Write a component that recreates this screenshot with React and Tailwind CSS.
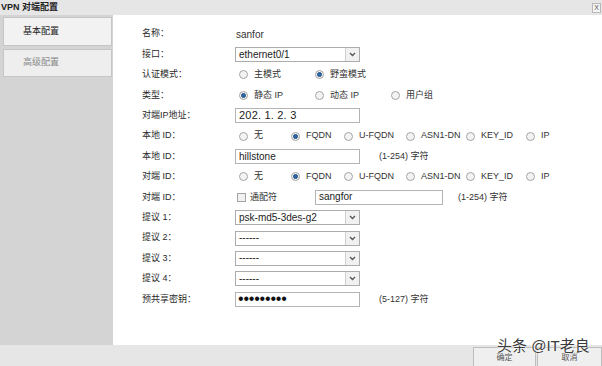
import React from 'react';

const Radio = ({ checked, label, className = '' }) => (
    <div className={`flex items-center ${className}`}>
        <span className="w-[9px] h-[9px] rounded-full border border-[#a4a4a4] bg-[#f3f3f3] flex items-center justify-center shrink-0">
            {checked && <span className="w-[5px] h-[5px] rounded-full bg-[#2f68a8] border border-[#1f4f85]"></span>}
        </span>
        <span className="ml-[6px] text-[9px] text-[#333]">{label}</span>
    </div>
);

const Chevron = () => (
    <svg width="7" height="5" viewBox="0 0 7 5">
        <path d="M1 1 L3.5 3.5 L6 1" fill="none" stroke="#555" strokeWidth="1.3" />
    </svg>
);

const Select = ({ value }) => (
    <div className="w-[125px] h-[15px] border border-[#acacac] bg-white flex items-center">
        <span className="flex-1 pl-[3px] text-[10px] text-[#222] leading-none">{value}</span>
        <span className="w-[14px] h-[13px] border-l border-[#cfcfcf] bg-[#f1f1f1] flex items-center justify-center">
            <Chevron />
        </span>
    </div>
);

const Input = ({ value, className = 'w-[125px]', textClass = 'text-[10px]' }) => (
    <div className={`h-[15px] border border-[#b4b4b4] bg-white flex items-center pl-[3px] ${className}`}>
        <span className={`${textClass} text-[#222] leading-none`}>{value}</span>
    </div>
);

const Row = ({ label, children }) => (
    <div className="flex items-center h-[20.4px]">
        <div className="w-[93px] text-[9px] text-[#2a2a2a]">{label}</div>
        {children}
    </div>
);

const IdRadios = () => (
    <div className="flex items-center pl-[4px]">
        <Radio label="无" className="w-[52px]" />
        <Radio label="FQDN" checked className="w-[53px]" />
        <Radio label="U-FQDN" className="w-[62px]" />
        <Radio label="ASN1-DN" className="w-[60px]" />
        <Radio label="KEY_ID" className="w-[60px]" />
        <Radio label="IP" />
    </div>
);

export default function App() {
    return (
        <div className="w-[602px] h-[366px] relative overflow-hidden bg-[#e6e6e6] font-['Liberation_Sans','Noto_Sans_CJK_SC',sans-serif]">
            <div className="h-[15px] flex items-center">
                <span className="pl-[1px] text-[9px] font-bold text-[#222]">VPN 对端配置</span>
                <span className="ml-auto mr-[1px] w-[9px] h-[10px] border border-[#b8b8b8] bg-[#f4f4f4] text-[7px] leading-none flex items-center justify-center text-[#555]">X</span>
            </div>

            <div className="flex h-[330px]">
                <div className="w-[113px] bg-[#d4d4d4] pl-[3px] pt-[2px] flex flex-col gap-[3px]">
                    <div className="w-[109px] h-[29px] bg-[#f2f2f2] border border-[#c6c6c6] flex items-center pl-[19px] text-[9px] text-[#222]">
                        基本配置
                    </div>
                    <div className="w-[109px] h-[28px] bg-[#eeeeee] border border-[#c6c6c6] flex items-center pl-[19px] text-[9px] text-[#8a8a8a]">
                        高级配置
                    </div>
                </div>

                <div className="flex-1 bg-white pl-[29px] pt-[9px]">
                    <Row label="名称：">
                        <span className="pl-[1px] text-[10px] text-[#333]">sanfor</span>
                    </Row>
                    <Row label="接口：">
                        <Select value="ethernet0/1" />
                    </Row>
                    <Row label="认证模式：">
                        <div className="flex items-center pl-[4px]">
                            <Radio label="主模式" className="w-[76px]" />
                            <Radio label="野蛮模式" checked />
                        </div>
                    </Row>
                    <Row label="类型：">
                        <div className="flex items-center pl-[4px]">
                            <Radio label="静态 IP" checked className="w-[76px]" />
                            <Radio label="动态 IP" className="w-[76px]" />
                            <Radio label="用户组" />
                        </div>
                    </Row>
                    <Row label="对端IP地址：">
                        <Input value="202. 1. 2. 3" textClass="text-[11px] tracking-[0.2px]" />
                    </Row>
                    <Row label="本地 ID：">
                        <IdRadios />
                    </Row>
                    <Row label="本地 ID：">
                        <Input value="hillstone" />
                        <span className="ml-[19px] text-[9px] text-[#333]">(1-254) 字符</span>
                    </Row>
                    <Row label="对端 ID：">
                        <IdRadios />
                    </Row>
                    <Row label="对端 ID：">
                        <div className="flex items-center w-[80px] pl-[2px]">
                            <span className="w-[9px] h-[9px] border border-[#a4a4a4] bg-[#f1f1f1]"></span>
                            <span className="ml-[4px] text-[9px] text-[#333]">通配符</span>
                        </div>
                        <Input value="sangfor" className="w-[128px]" />
                        <span className="ml-[15px] text-[9px] text-[#333]">(1-254) 字符</span>
                    </Row>
                    <Row label="提议 1：">
                        <Select value="psk-md5-3des-g2" />
                    </Row>
                    <Row label="提议 2：">
                        <Select value="------" />
                    </Row>
                    <Row label="提议 3：">
                        <Select value="------" />
                    </Row>
                    <Row label="提议 4：">
                        <Select value="------" />
                    </Row>
                    <Row label="预共享密钥：">
                        <div className="w-[125px] h-[15px] border border-[#b4b4b4] bg-white flex items-center pl-[2px]">
                            <span className="text-[16px] leading-none text-[#111] tracking-[-0.2px]">•••••••••</span>
                        </div>
                        <span className="ml-[19px] text-[9px] text-[#333]">(5-127) 字符</span>
                    </Row>
                </div>
            </div>

            <div className="h-[21px] flex items-start pl-[473px] pt-[2px]">
                <div className="w-[64px] h-[22px] border border-[#bdbdbd] bg-[#efefef] flex items-center justify-center text-[8px] text-[#555]">确定</div>
                <div className="w-[66px] h-[22px] ml-[1px] border border-[#bdbdbd] bg-[#efefef] flex items-center justify-center text-[8px] text-[#555]">取消</div>
            </div>

            <div className="absolute left-[497px] top-[338px] text-[15px] leading-none text-[#3c3c3c] [text-shadow:0_0_2px_#fff,0_0_2px_#fff]">
                头条 @IT老良
            </div>
        </div>
    );
}
